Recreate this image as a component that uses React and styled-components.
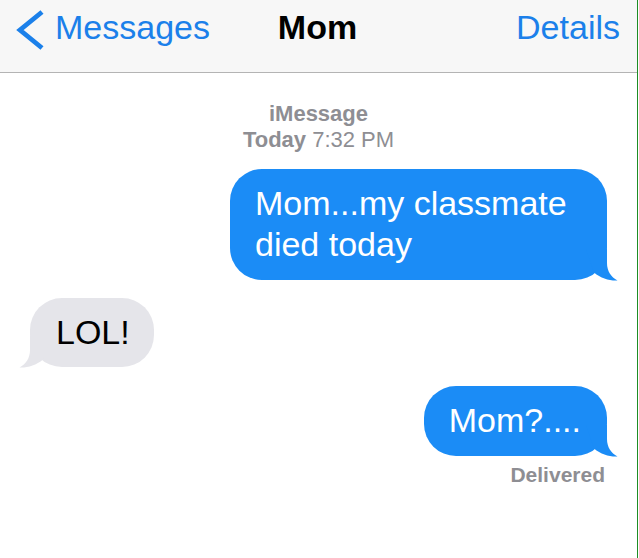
import React from "react";
import styled, { createGlobalStyle } from "styled-components";

const Global = createGlobalStyle`
  html, body { margin: 0; padding: 0; background: #ffffff; }
  body { font-family: "Liberation Sans", Arial, Helvetica, sans-serif; }
`;

const Page = styled.div`
  width: 637px;
  height: 558px;
  border-right: 1px solid #1e8c24;
  background: #ffffff;
  display: flex;
  flex-direction: column;
  overflow: hidden;
`;

const NavBar = styled.header`
  height: 73px;
  box-sizing: border-box;
  background: #f7f7f7;
  border-bottom: 1px solid #b4b4b4;
  display: grid;
  grid-template-columns: 1fr auto 1fr;
  align-items: start;
  padding: 0 17px 0 15px;
`;

const BackButton = styled.div`
  display: flex;
  align-items: flex-start;
  gap: 10px;
  padding-top: 8px;
  color: #1b80ea;
`;

const NavText = styled.span`
  display: block;
  font-size: 34px;
  line-height: 34px;
  padding-top: ${(p) => p.$top || 10}px;
  font-weight: ${(p) => (p.$bold ? 700 : 400)};
  color: ${(p) => (p.$bold ? "#000000" : "#1b80ea")};
  justify-self: ${(p) => p.$align || "auto"};
`;

const Thread = styled.main`
  flex: 1;
  display: flex;
  flex-direction: column;
  padding: 28px 30px 0 30px;
`;

const Stamp = styled.div`
  align-self: center;
  text-align: center;
  font-size: 22px;
  line-height: 26px;
  color: #8e8e93;
`;

const Strong = styled.span`
  font-weight: 700;
`;

const Bubble = styled.div`
  position: relative;
  align-self: ${(p) => (p.$out ? "flex-end" : "flex-start")};
  max-width: 377px;
  box-sizing: border-box;
  padding: ${(p) => (p.$out ? "14px 26px 15px 25px" : "14px 24px 14px 26px")};
  margin-top: ${(p) => p.$mt}px;
  border-radius: 32px;
  background: ${(p) => (p.$out ? "#1b8cf6" : "#e5e5ea")};
  color: ${(p) => (p.$out ? "#ffffff" : "#000000")};
  font-size: 34px;
  line-height: 41px;
`;

const Tail = styled.svg`
  position: absolute;
  bottom: -1px;
  width: 32px;
  height: 32px;
  ${(p) =>
    p.$out
      ? "right: -11px;"
      : "left: -11px; transform: scaleX(-1);"}
  fill: ${(p) => (p.$out ? "#1b8cf6" : "#e5e5ea")};
`;

const Status = styled.div`
  align-self: flex-end;
  margin: 7px 2px 0 0;
  font-size: 21px;
  line-height: 24px;
  font-weight: 700;
  color: #8e8e93;
`;

function BubbleTail({ out }) {
  return (
    <Tail $out={out} viewBox="0 0 32 32" aria-hidden="true">
      <path d="M0 0 L21 0 L21 14 C21 22 25 28 31.5 31.5 C24 32 15 29.5 8 23.5 Z" />
    </Tail>
  );
}

function Message({ out, mt, children }) {
  return (
    <Bubble $out={out} $mt={mt}>
      {children}
      <BubbleTail out={out} />
    </Bubble>
  );
}

export default function App() {
  return (
    <>
      <Global />
      <Page>
        <NavBar>
          <BackButton>
            <svg width="30" height="44" viewBox="0 0 30 44" aria-hidden="true">
              <polyline
                points="27,4 5,22 27,40"
                fill="none"
                stroke="#1b80ea"
                strokeWidth="4.8"
                strokeLinejoin="miter"
              />
            </svg>
            <NavText $top={2}>Messages</NavText>
          </BackButton>
          <NavText $bold>Mom</NavText>
          <NavText $align="end">Details</NavText>
        </NavBar>
        <Thread>
          <Stamp>
            <Strong>iMessage</Strong>
            <br />
            <Strong>Today</Strong> 7:32 PM
          </Stamp>
          <Message out mt={16}>Mom...my classmate died today</Message>
          <Message mt={18}>LOL!</Message>
          <Message out mt={19}>Mom?....</Message>
          <Status>Delivered</Status>
        </Thread>
      </Page>
    </>
  );
}
